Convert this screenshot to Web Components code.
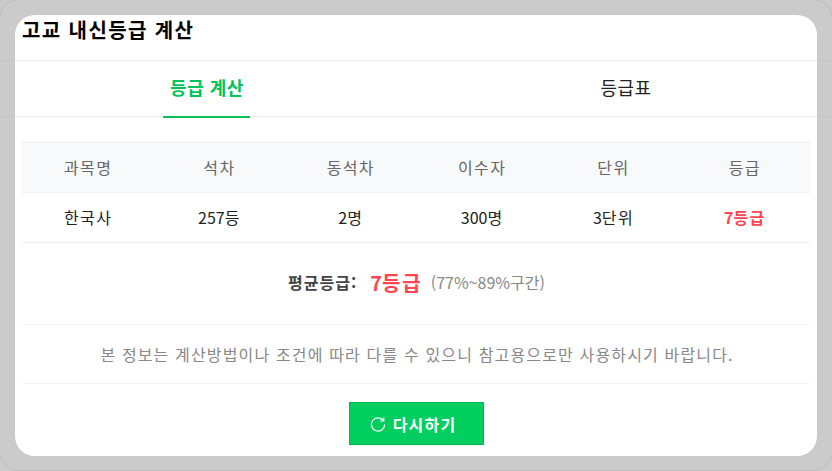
<!DOCTYPE html>
<html lang="ko">
<head>
<meta charset="utf-8">
<title>고교 내신등급 계산</title>
<style>
  html, body { margin: 0; height: 100%; }
  body { background: #cbcbcb; overflow: hidden; font-family: "Noto Sans CJK KR", "Noto Sans", sans-serif; }
</style>
</head>
<body>
<grade-backdrop>
  <grade-modal heading="고교 내신등급 계산">
    <grade-tabs active="0" labels="등급 계산,등급표"></grade-tabs>
    <grade-table></grade-table>
    <grade-average grade="7등급" range="(77%~89%구간)"></grade-average>
    <grade-notice>본 정보는 계산방법이나 조건에 따라 다를 수 있으니 참고용으로만 사용하시기 바랍니다.</grade-notice>
    <retry-button>다시하기</retry-button>
  </grade-modal>
</grade-backdrop>

<script>
// latin runs keep their natural width, only the hangul gets tracked out
const tight = (text) => text.replace(/[0-9()%~]+/g, '<i>$&</i>');
const tightCss = 'i { font-style: normal; letter-spacing: 0; }';

class GradeBackdrop extends HTMLElement {
  constructor() {
    super();
    this.attachShadow({mode:'open'}).innerHTML = `<style>
      :host { display: block; position: relative; width: 832px; height: 471px; padding: 15px; box-sizing: border-box; overflow: hidden; }
      .page { position: absolute; inset: -1px -1px 0 -1px; border: 1px solid #bdbdbd; border-radius: 20px; }
      .line { position: absolute; left: 0; right: 0; height: 1px; background: #c4c5c7; }
      .a { top: 60px; } .b { top: 116px; }
    </style>
    <div class="page"></div><div class="line a"></div><div class="line b"></div>
    <slot></slot>`;
  }
}

class GradeModal extends HTMLElement {
  constructor() {
    super();
    this.attachShadow({mode:'open'}).innerHTML = `<style>
      :host { display: flex; flex-direction: column; position: relative; width: 802px; height: 441px; background: #fff; border-radius: 20px; overflow: hidden; }
      header { height: 45px; border-bottom: 1px solid #eeeff1; padding-left: 7px; font-size: 20px; font-weight: 700; letter-spacing: 1.4px; line-height: 29px; color: #000; }
    </style>
    <header></header><slot></slot>`;
    this.shadowRoot.querySelector('header').textContent = this.getAttribute('heading');
  }
}

class GradeTabs extends HTMLElement {
  constructor() {
    super();
    this.attachShadow({mode:'open'}).innerHTML = `<style>
      :host { display: grid; grid-template-columns: 383px 383px; column-gap: 36px; height: 55px; border-bottom: 1px solid #e8eaed; }
      div { display: flex; justify-content: center; }
      span { height: 55px; padding: 0 6.5px 0 7.5px; line-height: 53px; font-size: 18px; letter-spacing: .5px; color: #222; }
      .on { color: #00c35a; font-weight: 700; border-bottom: 2px solid #00c35a; }
    </style>`;
    const active = Number(this.getAttribute('active'));
    this.getAttribute('labels').split(',').forEach((label, i) => {
      const cell = document.createElement('div');
      const text = document.createElement('span');
      text.textContent = label;
      if (i === active) text.className = 'on';
      cell.append(text);
      this.shadowRoot.append(cell);
    });
  }
}

class GradeTable extends HTMLElement {
  constructor() {
    super();
    const head = ['과목명', '석차', '동석차', '이수자', '단위', '등급'];
    const body = ['한국사', '257등', '2명', '300명', '3단위', '<b>7등급</b>'];
    const cells = (list) => list.map((c) => `<span>${tight(c)}</span>`).join('');
    this.attachShadow({mode:'open'}).innerHTML = `<style>
      :host { display: block; margin: 25px 7px 0; width: 788px; }
      .row { display: grid; grid-template-columns: repeat(6, 1fr); height: 48px; padding-bottom: 1px; align-items: center; text-align: center; font-size: 16px; letter-spacing: 1.4px; }
      span { padding-left: 1px; }
      .head { background: #f8f9fb; color: #666; border-top: 1px solid #eeeff3; border-bottom: 1px solid #f0f1f4; }
      .body { color: #222; border-bottom: 1px solid #eeeff3; }
      b { color: #ff4650; font-weight: 700; }
      ${tightCss}
    </style>
    <div class="row head">${cells(head)}</div>
    <div class="row body">${cells(body)}</div>`;
  }
}

class GradeAverage extends HTMLElement {
  constructor() {
    super();
    this.attachShadow({mode:'open'}).innerHTML = `<style>
      :host { display: flex; justify-content: center; align-items: center; margin: 0 7px; padding: 0 0 3px 1px; box-sizing: border-box; width: 788px; height: 82px; border-bottom: 1px solid #f3f4f6; font-size: 16px; letter-spacing: 1px; }
      .label { font-weight: 700; color: #444; }
      .grade { margin: 0 8px 0 13px; font-size: 20px; letter-spacing: 2px; font-weight: 700; color: #ff4650; }
      .range { color: #888; letter-spacing: 0; }
      ${tightCss}
    </style>
    <span class="label">평균등급:</span>
    <span class="grade">${tight(this.getAttribute('grade'))}</span>
    <span class="range">${tight(this.getAttribute('range'))}</span>`;
  }
}

class GradeNotice extends HTMLElement {
  constructor() {
    super();
    this.attachShadow({mode:'open'}).innerHTML = `<style>
      :host { display: flex; justify-content: center; align-items: center; margin: 0 7px; padding-left: 2px; box-sizing: border-box; width: 788px; height: 59px; border-bottom: 1px solid #f3f4f6; font-size: 16px; letter-spacing: 1.15px; color: #888; }
    </style><slot></slot>`;
  }
}

class RetryButton extends HTMLElement {
  constructor() {
    super();
    this.attachShadow({mode:'open'}).innerHTML = `<style>
      :host { display: flex; align-self: center; justify-content: center; align-items: center; gap: 7px; margin-top: 18px; padding-right: 6px; width: 135px; height: 43px; box-sizing: border-box; background: #00cf5f; border: 1px solid #00b956; color: #fff; font-size: 16px; letter-spacing: 1.2px; font-weight: 700; }
      svg { width: 16px; height: 16px; fill: none; stroke: #fff; stroke-width: 1.2; }
    </style>
    <svg viewBox="0 0 16 16"><path d="M13.4 4.6A6.6 6.6 0 1 0 14.6 8.2"/><path d="M13.8 1.4V5H10.2"/></svg><slot></slot>`;
  }
}

customElements.define('grade-backdrop', GradeBackdrop);
customElements.define('grade-modal', GradeModal);
customElements.define('grade-tabs', GradeTabs);
customElements.define('grade-table', GradeTable);
customElements.define('grade-average', GradeAverage);
customElements.define('grade-notice', GradeNotice);
customElements.define('retry-button', RetryButton);
</script>
</body>
</html>
